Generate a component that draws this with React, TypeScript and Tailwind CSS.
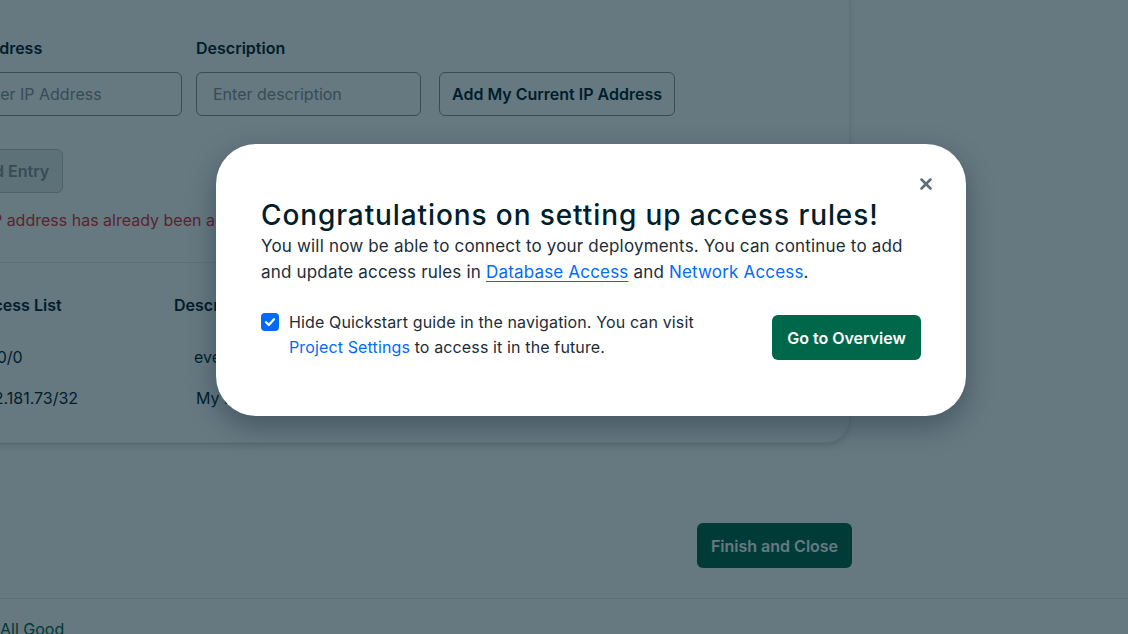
import React from "react";

export default function App() {
  return (
    <div
      className="relative w-[1128px] h-[634px] overflow-hidden bg-white text-[#001e2b]"
      style={{ fontFamily: "Inter, 'Noto Sans', sans-serif" }}
    >
      {/* underlying page */}
      <div className="flex flex-col">
        <div className="-ml-[82px] -mt-[11px] w-[932px] rounded-b-[24px] border border-[#e8edeb] bg-white px-[40px] pt-[48px] pb-[24px] shadow-[0_4px_10px_-4px_rgba(0,30,43,0.3)]">
          <div className="flex items-end">
            <div className="flex flex-col w-[223px]">
              <label className="text-[16px] leading-5 font-semibold mb-[14px] whitespace-nowrap">IP Address</label>
              <div className="h-[44px] rounded-[6px] border border-[#889397] px-4 flex items-center text-[16px] text-[#889397] whitespace-nowrap">
                Enter IP Address
              </div>
            </div>
            <div className="flex flex-col w-[225px] ml-[14px]">
              <label className="text-[16px] leading-5 font-semibold mb-[14px]">Description</label>
              <div className="h-[44px] rounded-[6px] border border-[#889397] px-4 flex items-center text-[16px] text-[#889397]">
                Enter description
              </div>
            </div>
            <div className="ml-[18px] h-[44px] w-[236px] rounded-[6px] border border-[#889397] flex items-center justify-center text-[16px] font-semibold whitespace-nowrap">
              Add My Current IP Address
            </div>
          </div>
          <div className="mt-[33px] h-[44px] w-[104px] rounded-[6px] border border-[#c1c7c6] bg-[#e8edeb] flex items-center justify-center text-[16px] font-semibold text-[#889397]">
            Add Entry
          </div>
          <p className="mt-[17px] -ml-[8px] text-[16px] leading-5 text-[#db3030] whitespace-nowrap">
            This IP address has already been added to the access list.
          </p>
          <div className="mt-[32px] border-t border-[#e8edeb]" />
          <div className="mt-[32px] flex text-[16px] leading-5 font-semibold whitespace-nowrap">
            <div className="w-[215px] -ml-[5px] pr-[7px] box-content">IP Access List</div>
            <div className="-ml-[2px]">Description</div>
          </div>
          <div className="mt-[21px] flex flex-col text-[16px] whitespace-nowrap">
            <div className="h-[41px] flex items-center">
              <div className="w-[217px] -ml-[4px] shrink-0">0.0.0.0/0</div>
              <div className="pl-[22px]">everywhere</div>
            </div>
            <div className="h-[41px] flex items-center">
              <div className="w-[215px] pl-[2px] shrink-0">73.92.181.73/32</div>
              <div className="pl-[22px]">My IP Address</div>
            </div>
          </div>
        </div>
        <div className="mt-[80px] flex justify-end pr-[276px]">
          <div className="h-[45px] w-[155px] rounded-[6px] bg-[#00684a] flex items-center justify-center text-[16px] font-semibold text-white">
            Finish and Close
          </div>
        </div>
        <div className="mt-[30px] border-t border-[#e8edeb] pt-[18px] text-[16px] leading-6 text-[#00684a]">
          All Good
        </div>
      </div>

      {/* backdrop */}
      <div className="absolute inset-0 bg-[rgba(0,30,43,0.6)]" />

      {/* modal */}
      <div className="absolute left-[216px] top-[144px] w-[750px] h-[272px] rounded-[40px] bg-white px-[45px] pt-[55px] shadow-[0_10px_28px_rgba(0,30,43,0.35)]">
        <button className="absolute right-[34px] top-[34px] w-[12px] h-[12px] flex items-center justify-center">
          <svg width="12" height="12" viewBox="0 0 12 12" fill="none">
            <path d="M1.5 1.5L10.5 10.5M10.5 1.5L1.5 10.5" stroke="#5c6c75" strokeWidth="2.5" strokeLinecap="round" />
          </svg>
        </button>
        <h1 className="text-[28px] leading-[32px] font-medium tracking-[0.9px] whitespace-nowrap">
          Congratulations on setting up access rules!
        </h1>
        <p className="mt-[2px] text-[17px] leading-[26px] tracking-[0.18px] text-[#1c2d38] whitespace-nowrap">
          You will now be able to connect to your deployments. You can continue to add
          <br />
          and update access rules in{" "}
          <a className="text-[#016bf8] underline underline-offset-[3px]">Database Access</a> and{" "}
          <a className="text-[#016bf8]">Network Access</a>.
        </p>
        <div className="mt-[24px] flex items-center justify-between">
          <div className="flex items-start">
            <div className="mt-[3px] w-[18px] h-[18px] rounded-[4px] bg-[#016bf8] flex items-center justify-center shrink-0">
              <svg width="12" height="10" viewBox="0 0 12 10" fill="none">
                <path d="M2 5.2L4.8 8L10 2.2" stroke="white" strokeWidth="2.2" strokeLinecap="round" strokeLinejoin="round" />
              </svg>
            </div>
            <p className="ml-[10px] text-[16px] leading-[25px] tracking-[0.13px] text-[#1c2d38] whitespace-nowrap">
              Hide Quickstart guide in the navigation. You can visit
              <br />
              <a className="text-[#016bf8]">Project Settings</a> to access it in the future.
            </p>
          </div>
          <div className="mt-[6px] h-[45px] w-[149px] rounded-[6px] bg-[#00684a] flex items-center justify-center text-[16px] font-semibold text-white">
            Go to Overview
          </div>
        </div>
      </div>
    </div>
  );
}
